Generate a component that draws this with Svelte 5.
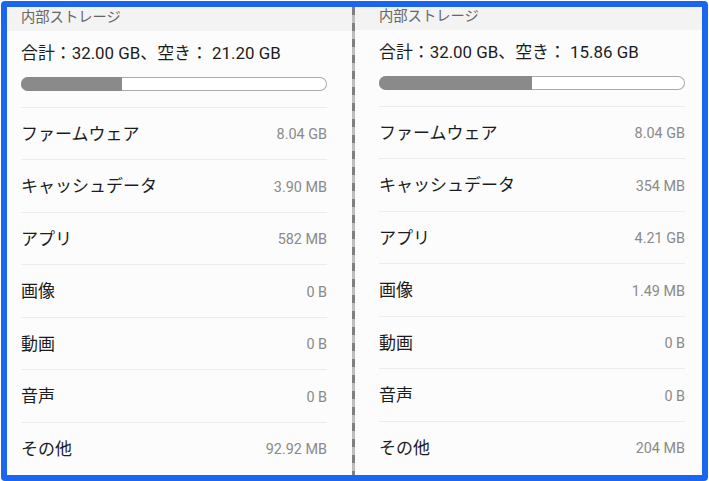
<script>
  const panels = [
    {
      free: '21.20 GB',
      used: 33,
      rows: [
        ['ファームウェア', '8.04 GB'],
        ['キャッシュデータ', '3.90 MB'],
        ['アプリ', '582 MB'],
        ['画像', '0 B'],
        ['動画', '0 B'],
        ['音声', '0 B'],
        ['その他', '92.92 MB']
      ]
    },
    {
      free: '15.86 GB',
      used: 50,
      rows: [
        ['ファームウェア', '8.04 GB'],
        ['キャッシュデータ', '354 MB'],
        ['アプリ', '4.21 GB'],
        ['画像', '1.49 MB'],
        ['動画', '0 B'],
        ['音声', '0 B'],
        ['その他', '204 MB']
      ]
    }
  ];
</script>

<div class="frame">
  {#each panels as panel, i}
    {#if i === 1}
      <div class="divider"></div>
    {/if}
    <section class="panel" class:second={i === 1}>
      <header>内部ストレージ</header>
      <div class="total">合計：32.00 GB、空き： {panel.free}</div>
      <div class="bar"><div class="fill" style="width: {panel.used}%"></div></div>
      <ul>
        {#each panel.rows as row}
          <li>
            <span class="name">{row[0]}</span>
            <span class="size">{row[1]}</span>
          </li>
        {/each}
      </ul>
    </section>
  {/each}
</div>

<style>
  :global(body) {
    margin: 0;
    background: #fff;
  }

  .frame {
    box-sizing: border-box;
    width: 707px;
    height: 480px;
    margin: 1px 0 0 1px;
    display: flex;
    background: #fcfcfc;
    border: 6px solid #1a66ee;
    border-radius: 4px;
    overflow: hidden;
    font-family: "Roboto", "Noto Sans CJK JP", sans-serif;
  }

  .panel {
    flex: 0 0 345px;
    padding-left: 14px;
    box-sizing: border-box;
  }

  .panel.second {
    flex: 1;
    padding-left: 24px;
    margin-top: -1px;
  }

  .divider {
    flex: 0 0 3px;
    background: repeating-linear-gradient(to bottom, #808080 0 8px, #bdbdbd 8px 16px);
  }

  header {
    height: 24px;
    margin-left: -14px;
    padding-left: 14px;
    background: #f3f3f3;
    color: #666;
    font-size: 14.3px;
    line-height: 20px;
  }

  .second header {
    margin-left: -24px;
    padding-left: 24px;
  }

  .total {
    margin-top: 10px;
    color: #1c1c1c;
    font-size: 16.9px;
    line-height: 25px;
    white-space: nowrap;
  }

  .bar {
    width: 306px;
    height: 14px;
    margin-top: 11px;
    background: #fff;
    box-shadow: inset 0 0 0 1px #aaa;
    border-radius: 7px;
    overflow: hidden;
  }

  .fill {
    height: 100%;
    background: #8a8a8a;
  }

  ul {
    list-style: none;
    width: 306px;
    margin: 15.5px 0 0;
    padding: 0;
  }

  li {
    box-sizing: border-box;
    height: 52.5px;
    padding-bottom: 2px;
    display: flex;
    align-items: center;
    justify-content: space-between;
    border-top: 1px solid #ececec;
  }

  .name {
    color: #1c1c1c;
    font-size: 17px;
  }

  .size {
    margin-top: 5px;
    color: #8a8a8a;
    font-size: 14.4px;
  }
</style>
